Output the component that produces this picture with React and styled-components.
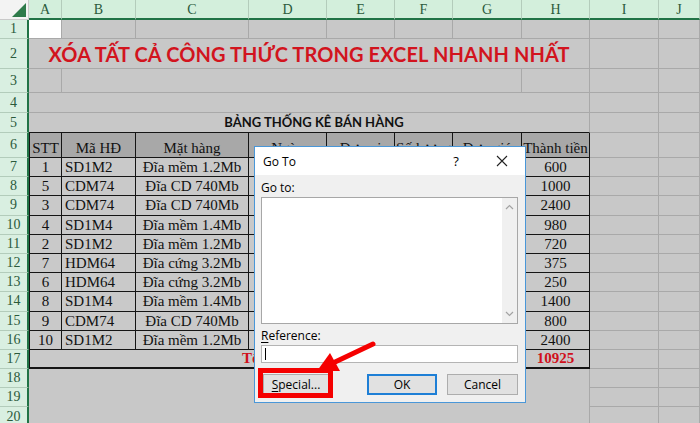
import React from 'react';
import styled, { createGlobalStyle, css } from 'styled-components';

const GlobalStyle = createGlobalStyle`
  html, body { margin: 0; padding: 0; width: 700px; height: 423px; overflow: hidden; background: #c8c8c8; }
  #root { width: 700px; height: 423px; }
  * { box-sizing: border-box; }
`;

const COLS = ['A', 'B', 'C', 'D', 'E', 'F', 'G', 'H', 'I', 'J'];
const GREEN = '#217346';
const GRID = '#a9a9a9';
const INK = '#151515';

const Page = styled.div`
  position: relative;
  width: 700px;
  height: 423px;
  overflow: hidden;
`;

const Sheet = styled.div`
  display: grid;
  grid-template-columns: 29px 33px 74px 113px 78px 68px 58px 69px 68px 69px 1fr;
  grid-template-rows: 20px 19px 30px 24px 20px 20px 25px repeat(14, 19.2px);
  width: 700px;
  height: 423px;
  overflow: hidden;
  background: #c8c8c8;
  font-family: "Liberation Serif", "Times New Roman", serif;
`;

const Corner = styled.div`
  background: #f3f3f3;
  border-right: 1px solid #c9c9c9;
  border-bottom: 1px solid #c9c9c9;
  position: relative;
  svg { position: absolute; right: 2px; bottom: 2px; }
`;

const ColHead = styled.div`
  background: #d3efdc;
  border-right: 1px solid #b3ccbb;
  border-bottom: 2px solid ${GREEN};
  color: #2b5a3b;
  font-size: 14px;
  display: flex;
  align-items: center;
  justify-content: center;
  padding-top: 1px;
`;

const RowHead = styled.div`
  background: #d9efe1;
  border-bottom: 1px solid #b3ccbb;
  border-right: 2px solid ${GREEN};
  color: #2b5a3b;
  font-size: 14px;
  display: flex;
  align-items: center;
  justify-content: center;
  grid-column: 1;
`;

const Cell = styled.div`
  background: ${p => (p.$active ? '#ffffff' : '#c8c8c8')};
  border-right: 1px solid ${GRID};
  border-bottom: 1px solid ${p => (p.$tableTop ? INK : GRID)};
  grid-column: span ${p => p.$span || 1};
  display: flex;
  align-items: ${p => p.$valign || 'center'};
  justify-content: center;
`;

const Blank = styled.div`
  grid-column: 2 / span 8;
  grid-row: span 3;
  background: #c8c8c8;
  border-right: 1px solid ${GRID};
`;

const Title = styled.div`
  font-family: "Lato", "Liberation Sans", sans-serif;
  font-weight: 700;
  font-size: 20px;
  color: #d2141e;
  letter-spacing: 0.1px;
`;

const SubTitle = styled.div`
  font-family: "Lato", "Liberation Sans", sans-serif;
  font-weight: 700;
  font-size: 13px;
  color: #111;
  padding-bottom: 2px;
  padding-left: 10px;
`;

const TCell = styled.div`
  background: ${p => (p.$head ? '#a8a8a8' : '#c9c9c9')};
  border-right: 1px solid ${INK};
  border-bottom: ${p => (p.$last ? '2px' : '1px')} solid ${INK};
  ${p => p.$first && css`border-left: 1px solid ${INK};`}
  grid-column: span ${p => p.$span || 1};
  display: flex;
  align-items: center;
  justify-content: ${p => (p.$left ? 'flex-start' : 'center')};
  padding-left: ${p => (p.$left ? '3px' : '0')};
  font-size: 15px;
  color: ${p => (p.$red ? '#d0101b' : '#111')};
  font-weight: ${p => (p.$red ? 700 : 400)};
  white-space: nowrap;
  overflow: hidden;
  line-height: 1;
  padding-top: ${p => (p.$head ? '6px' : '1px')};
`;

/* ---------- dialog ---------- */
const Dialog = styled.div`
  position: absolute;
  left: 254px;
  top: 146px;
  width: 272px;
  height: 257px;
  border: 1px solid #4a97d8;
  background: #f0f0f0;
  display: flex;
  flex-direction: column;
  font-family: "Open Sans", "Noto Sans", sans-serif;
  font-size: 12px;
  color: #000;
`;

const TitleBar = styled.div`
  height: 28px;
  background: #fff;
  display: flex;
  align-items: center;
  padding-left: 8px;
  font-size: 12px;
`;

const TitleText = styled.div`
  flex: 1;
`;

const Help = styled.div`
  width: 12px;
  text-align: center;
  font-size: 13px;
  margin-right: 34px;
`;

const Close = styled.div`
  width: 12px;
  height: 12px;
  margin-right: 17px;
  display: flex;
`;

const Body = styled.div`
  flex: 1;
  display: flex;
  flex-direction: column;
  padding: 5px 7px 0 6px;
`;

const Label = styled.div`
  height: 16px;
  line-height: 16px;
  margin-top: ${p => p.$mt || 0}px;
  margin-bottom: 1px;
  u { text-decoration: underline; text-underline-offset: 2px; }
`;

const ListBox = styled.div`
  height: 127px;
  background: #fff;
  border: 1px solid #a7a7a7;
  display: flex;
  justify-content: flex-end;
`;

const ScrollBar = styled.div`
  width: 15px;
  background: #f0f0f0;
  display: flex;
  flex-direction: column;
  justify-content: space-between;
  align-items: center;
  padding: 6px 0;
`;

const Input = styled.div`
  height: 18px;
  background: #fff;
  border: 1px solid #b4b4b4;
  display: flex;
  align-items: center;
  padding-left: 3px;
`;

const Caret = styled.div`
  width: 1px;
  height: 12px;
  background: #000;
`;

const Buttons = styled.div`
  display: flex;
  margin-top: 11px;
  gap: 10px;
  padding-left: 2px;
`;

const Button = styled.div`
  height: 21px;
  width: ${p => p.$w}px;
  background: #e1e1e1;
  border: ${p => (p.$default ? '2px solid #1e7fd6' : '1px solid #adadad')};
  display: flex;
  align-items: center;
  justify-content: center;
  margin-right: ${p => (p.$push ? 'auto' : '0')};
  u { text-decoration: underline; text-underline-offset: 2px; }
`;

const Highlight = styled.div`
  position: absolute;
  left: 258px;
  top: 368px;
  width: 75px;
  height: 30px;
  border: 5px solid #f50000;
`;

const Overlay = styled.svg`
  position: absolute;
  left: 0;
  top: 0;
  pointer-events: none;
`;

const rows = [
  ['1', 'SD1M2', 'Đĩa mềm 1.2Mb', '600'],
  ['5', 'CDM74', 'Đĩa CD 740Mb', '1000'],
  ['3', 'CDM74', 'Đĩa CD 740Mb', '2400'],
  ['4', 'SD1M4', 'Đĩa mềm 1.4Mb', '980'],
  ['2', 'SD1M2', 'Đĩa mềm 1.2Mb', '720'],
  ['7', 'HDM64', 'Đĩa cứng 3.2Mb', '375'],
  ['6', 'HDM64', 'Đĩa cứng 3.2Mb', '250'],
  ['8', 'SD1M4', 'Đĩa mềm 1.4Mb', '1400'],
  ['9', 'CDM74', 'Đĩa CD 740Mb', '800'],
  ['10', 'SD1M2', 'Đĩa mềm 1.2Mb', '2400'],
];

const heads = ['STT', 'Mã HĐ', 'Mặt hàng', 'Ngày', 'Đơn vị', 'Số lượng', 'Đơn giá', 'Thành tiền'];

const Chevron = ({ up }) => (
  <svg width="9" height="6" viewBox="0 0 9 6">
    <polyline
      points={up ? '1,5 4.5,1.5 8,5' : '1,1 4.5,4.5 8,1'}
      fill="none"
      stroke="#a3a3a3"
      strokeWidth="1.2"
    />
  </svg>
);

export default function App() {
  return (
    <>
      <GlobalStyle />
      <Page>
        <Sheet>
          <Corner>
            <svg width="14" height="14" viewBox="0 0 14 14">
              <polygon points="0,14 14,0 14,14" fill="#2e7a4a" />
            </svg>
          </Corner>
          {COLS.map(c => (
            <ColHead key={c}>{c}</ColHead>
          ))}

          <RowHead>1</RowHead>
          <Cell $active />
          {COLS.slice(1).map(c => (
            <Cell key={c} />
          ))}

          <RowHead>2</RowHead>
          <Cell $span={8}>
            <Title>XÓA TẤT CẢ CÔNG THỨC TRONG EXCEL NHANH NHẤT</Title>
          </Cell>
          <Cell />
          <Cell />

          <RowHead>3</RowHead>
          <Cell />
          <Cell $span={6} />
          <Cell />
          <Cell />
          <Cell />

          <RowHead>4</RowHead>
          <Cell $span={8} />
          <Cell />
          <Cell />

          <RowHead>5</RowHead>
          <Cell $span={8} $valign="flex-end" $tableTop>
            <SubTitle>BẢNG THỐNG KÊ BÁN HÀNG</SubTitle>
          </Cell>
          <Cell />
          <Cell />

          <RowHead>6</RowHead>
          {heads.map((h, i) => (
            <TCell key={h} $head $first={i === 0}>
              {h}
            </TCell>
          ))}
          <Cell />
          <Cell />

          {rows.map((r, idx) => (
            <React.Fragment key={idx}>
              <RowHead>{idx + 7}</RowHead>
              <TCell $first>{r[0]}</TCell>
              <TCell $left>{r[1]}</TCell>
              <TCell>{r[2]}</TCell>
              <TCell />
              <TCell />
              <TCell />
              <TCell />
              <TCell>{r[3]}</TCell>
              <Cell />
              <Cell />
            </React.Fragment>
          ))}

          <RowHead>17</RowHead>
          <TCell $first $span={7} $red $last>
            Tổng cộng
          </TCell>
          <TCell $red $last>10925</TCell>
          <Cell />
          <Cell />

          <RowHead>18</RowHead>
          <Blank />
          <Cell />
          <Cell />
          <RowHead>19</RowHead>
          <Cell />
          <Cell />
          <RowHead>20</RowHead>
          <Cell />
          <Cell />
        </Sheet>

        <Dialog>
          <TitleBar>
            <TitleText>Go To</TitleText>
            <Help>?</Help>
            <Close>
              <svg width="12" height="12" viewBox="0 0 12 12">
                <path d="M1 1 L11 11 M11 1 L1 11" stroke="#222" strokeWidth="1.1" />
              </svg>
            </Close>
          </TitleBar>
          <Body>
            <Label>Go to:</Label>
            <ListBox>
              <ScrollBar>
                <Chevron up />
                <Chevron />
              </ScrollBar>
            </ListBox>
            <Label $mt={4}>
              <u>R</u>eference:
            </Label>
            <Input>
              <Caret />
            </Input>
            <Buttons>
              <Button $w={66} $push>
                <span>
                  <u>S</u>pecial...
                </span>
              </Button>
              <Button $w={70} $default>OK</Button>
              <Button $w={71}>Cancel</Button>
            </Buttons>
          </Body>
        </Dialog>

        <Highlight />
        <Overlay width="700" height="423" viewBox="0 0 700 423">
          <line x1="373" y1="344" x2="334" y2="362.5" stroke="#f50000" strokeWidth="5" strokeLinecap="round" />
          <polygon points="317,371 330,353 340,371" fill="#f50000" />
        </Overlay>
      </Page>
    </>
  );
}
